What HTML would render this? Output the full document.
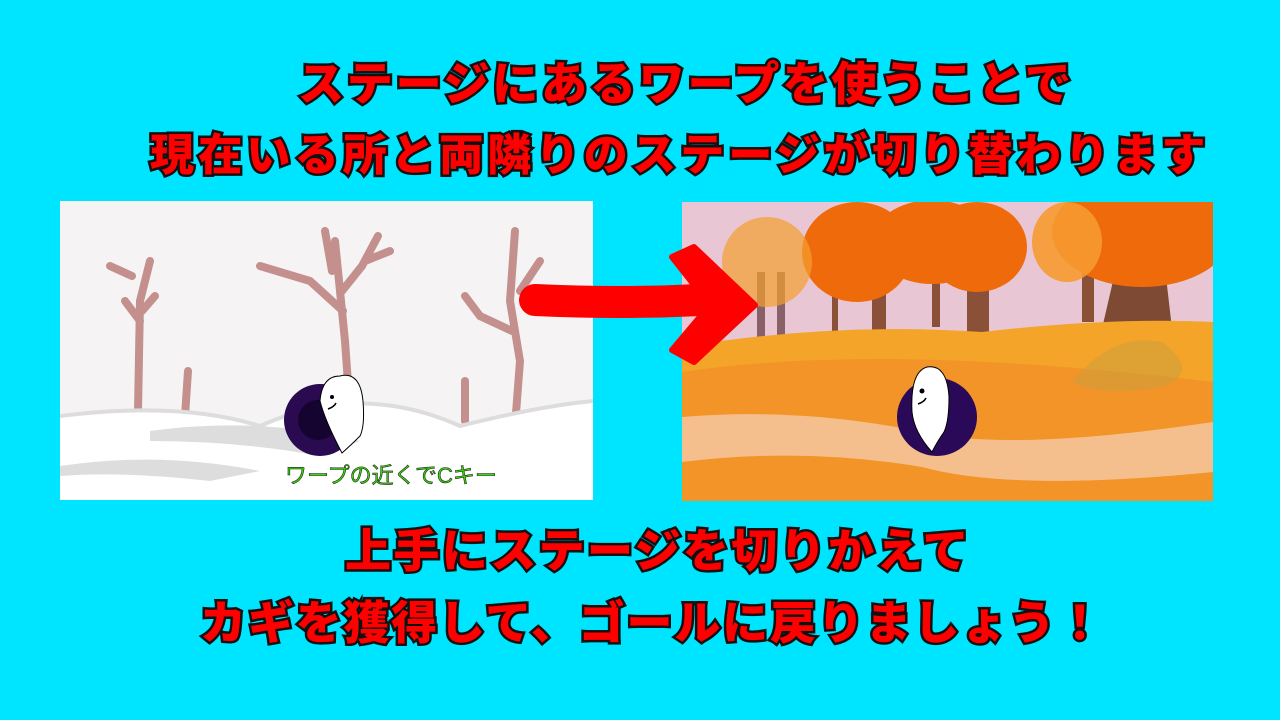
<!DOCTYPE html>
<html><head><meta charset="utf-8"><style>
body{margin:0;width:1280px;height:720px;background:#00E5FF;position:relative;overflow:hidden}
.t{position:absolute;white-space:nowrap;font-family:"Liberation Sans","Noto Sans CJK JP",sans-serif;font-weight:900;color:#f00;-webkit-text-stroke:5px #111;paint-order:stroke fill;line-height:1}
</style></head><body>
<div class="t" style="left:298px;top:61px;font-size:46px;letter-spacing:2.8px">ステージにあるワープを使うことで</div>
<div class="t" style="left:150px;top:134px;font-size:44px;letter-spacing:4.2px">現在いる所と両隣りのステージが切り替わります</div>
<div class="t" style="left:345px;top:528px;font-size:46px;letter-spacing:2.4px">上手にステージを切りかえて</div>
<div class="t" style="left:200px;top:600px;font-size:46px;letter-spacing:1.8px">カギを獲得して、ゴールに戻りましょう！</div>

<svg style="position:absolute;left:60px;top:201px" width="533" height="299" viewBox="0 0 533 299">
<rect width="533" height="299" fill="#f6f3f4"/>
<g fill="none" stroke="#c3908e" stroke-width="8" stroke-linecap="round">
<path d="M78 210 L80 100 L90 60 M80 120 L65 100 M82 110 L95 95 M72 75 L50 65"/>
<path d="M125 215 L128 170"/>
<path d="M290 210 L285 140 L275 40 M283 110 L250 80 L200 65 M282 90 L302 65 L318 35 M272 70 L265 30 M305 60 L330 50"/>
<path d="M455 225 L460 160 L450 100 L455 30 M452 130 L420 115 L405 95 M460 90 L480 60"/>
<path d="M405 220 L405 180"/>
</g>
<path d="M0 215 Q120 200 200 225 Q300 180 400 225 Q480 205 533 200 V299 H0Z" fill="#fff"/>
<path d="M0 215 Q120 200 200 225 Q300 180 400 225 Q480 205 533 200" fill="none" stroke="#ddd" stroke-width="4"/>
<path d="M90 230 Q200 215 300 240 L260 255 Q180 240 90 240Z" fill="#ddd"/>
<path d="M0 265 Q100 250 200 270 L150 280 Q60 270 0 275Z" fill="#ddd"/>
<circle cx="260" cy="219" r="36" fill="#2a0a50"/>
<circle cx="258" cy="219" r="20" fill="#150330"/>
<path d="M280 175 Q300 170 303 200 Q305 225 300 235 Q290 245 282 252 Q265 220 260 200 Q262 175 280 175Z" fill="#fff" stroke="#000" stroke-width="1"/>
<circle cx="272" cy="196" r="2" fill="#000"/><path d="M268 208 Q274 206 276 202" stroke="#000" stroke-width="1.5" fill="none"/>
<text x="225" y="282" font-family="Liberation Sans,Noto Sans CJK JP,sans-serif" font-size="22" fill="#33dd00" stroke="#222" stroke-width="0.6">ワープの近くでCキー</text>
</svg>

<svg style="position:absolute;left:682px;top:202px" width="531" height="299" viewBox="0 0 531 299">
<rect width="531" height="299" fill="#e8c6d4"/>
<g fill="#8a5038">
<rect x="190" y="60" width="14" height="75"/><rect x="285" y="60" width="22" height="85"/><rect x="250" y="60" width="8" height="65"/><rect x="400" y="60" width="12" height="60"/><path d="M440 40 L480 40 L495 170 L410 170Z" fill="#7f4a33"/><rect x="75" y="70" width="8" height="75" fill="#8a6068"/><rect x="95" y="70" width="8" height="75" fill="#8a6068"/><rect x="150" y="90" width="6" height="45"/>
</g>
<g fill="#ee6a0a">
<ellipse cx="175" cy="50" rx="55" ry="50"/><ellipse cx="250" cy="40" rx="60" ry="42"/><ellipse cx="295" cy="45" rx="50" ry="45"/><ellipse cx="460" cy="30" rx="90" ry="55"/></g>
<ellipse cx="85" cy="60" rx="45" ry="45" fill="#f4a030" opacity=".7"/>
<ellipse cx="385" cy="40" rx="35" ry="40" fill="#f69a30" opacity=".9"/>
<path d="M0 145 Q150 120 300 130 Q430 115 531 120 V299 H0Z" fill="#f4a428"/>
<path d="M0 170 Q200 140 531 180 V299 H0Z" fill="#f08a26" opacity=".6"/>
<path d="M0 215 Q120 205 240 230 Q330 250 531 220 V270 Q330 290 240 265 Q120 245 0 260Z" fill="#f6c6a0" opacity=".85"/>
<path d="M390 180 Q430 130 480 140 Q520 170 480 185 Q420 195 390 180Z" fill="#c8a040" opacity=".5"/>
<ellipse cx="255" cy="215" rx="40" ry="39" fill="#2a0a58"/>
<path d="M245 165 Q265 162 267 195 Q267 220 262 230 Q255 240 250 250 Q232 230 230 210 Q228 170 245 165Z" fill="#fff" stroke="#000" stroke-width="1"/>
<circle cx="240" cy="189" r="2.5" fill="#000"/><path d="M236 202 Q242 200 244 196" stroke="#000" stroke-width="1.5" fill="none"/>
</svg>

<svg style="position:absolute;left:0;top:0" width="1280" height="720">
<path d="M535 300 Q620 304 700 300" stroke="#f00" stroke-width="32" stroke-linecap="round" fill="none"/>
<path d="M672 257 L694 247 L755 305 L694 362 L672 350 L710 305Z" fill="#f00" stroke="#f00" stroke-width="6" stroke-linejoin="round"/>
</svg>
</body></html>
